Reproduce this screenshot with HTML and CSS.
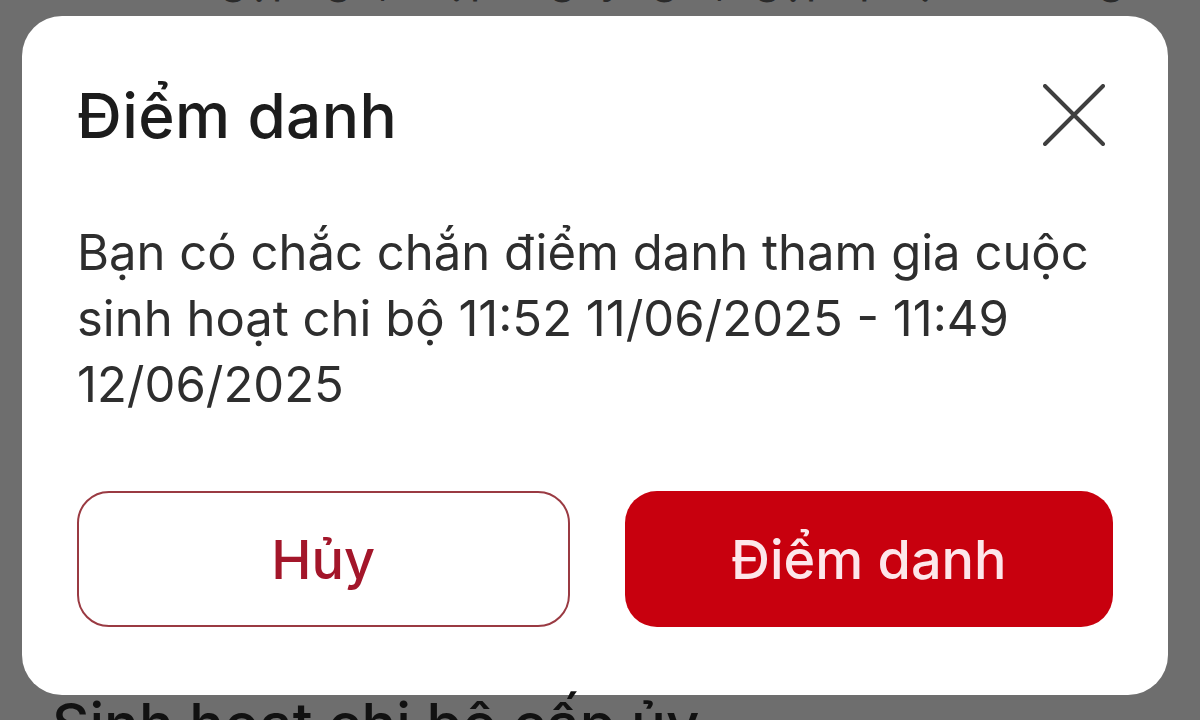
FILE: index.html
```html
<!DOCTYPE html>
<html lang="vi">
<head>
<meta charset="utf-8">
<title>Điểm danh</title>
<link rel="stylesheet" href="styles.css">
</head>
<body>
<div class="screen">
  <div class="behind-top"><span class="behind-top-text">gặp gỡ, họp ngày giờ, gặp phụ trách g</span></div>
  <div class="dialog">
    <div class="dialog-head">
      <h1 class="dialog-title">Điểm danh</h1>
      <button class="close-btn" aria-label="Đóng">
        <svg viewBox="0 0 62 62" width="62" height="62">
          <path d="M2 2 L60 60 M60 2 L2 60" stroke="#3f3f3f" stroke-width="4" stroke-linecap="round" fill="none"/>
        </svg>
      </button>
    </div>
    <p class="dialog-body">Bạn có chắc chắn điểm danh tham gia cuộc sinh hoạt chi bộ 11:52 11/06/2025 - 11:49 12/06/2025</p>
    <div class="dialog-actions">
      <button class="btn btn-outline">Hủy</button>
      <button class="btn btn-solid">Điểm danh</button>
    </div>
  </div>
  <div class="behind-bottom">Sinh hoạt chi bộ cấp ủy</div>
</div>
</body>
</html>
```
FILE: styles.css
```css
html, body {
  margin: 0;
  padding: 0;
  width: 1200px;
  height: 720px;
  overflow: hidden;
  background: #6e6e6e;
}

.screen {
  display: flex;
  flex-direction: column;
  width: 1200px;
  height: 720px;
  overflow: hidden;
  font-family: "Inter", "Noto Sans", sans-serif;
}

.behind-top {
  flex-shrink: 0;
  height: 16px;
  overflow: hidden;
  display: flex;
  align-items: flex-end;
  padding-left: 220px;
}

.behind-top-text {
  font-size: 44px;
  line-height: 44px;
  color: #2a2a2a;
  margin-bottom: 17px;
  white-space: nowrap;
  word-spacing: 14px;
}

.dialog {
  flex-shrink: 0;
  margin: 0 32px 0 22px;
  height: 679px;
  box-sizing: border-box;
  background: #ffffff;
  border-radius: 40px;
  padding: 0 55px;
  display: flex;
  flex-direction: column;
}

.dialog-head {
  display: flex;
  align-items: center;
  justify-content: space-between;
  height: 198px;
}

.dialog-title {
  margin: 0;
  font-size: 62px;
  font-weight: 500;
  color: #1c1c1c;
  letter-spacing: 0.4px;
}

.close-btn {
  background: none;
  border: none;
  padding: 0;
  margin-right: 8px;
  width: 62px;
  height: 62px;
  display: flex;
}

.dialog-body {
  margin: 6px 0 0 0;
  font-size: 49px;
  line-height: 66px;
  color: #2e2e2e;
}

.dialog-actions {
  display: flex;
  gap: 55px;
  margin-top: 73px;
}

.btn {
  flex: 1;
  height: 136px;
  border-radius: 32px;
  font-family: "Inter", "Noto Sans", sans-serif;
  font-size: 54px;
  font-weight: 500;
  box-sizing: border-box;
}

.btn-outline {
  background: #ffffff;
  border: 2.5px solid #9a3a42;
  color: #a3162a;
}

.btn-solid {
  background: #c8000e;
  border: none;
  color: #fde6ea;
}

.behind-bottom {
  flex-shrink: 0;
  padding-left: 52px;
  font-size: 58px;
  line-height: 58px;
  font-weight: 500;
  color: #111111;
}
```
